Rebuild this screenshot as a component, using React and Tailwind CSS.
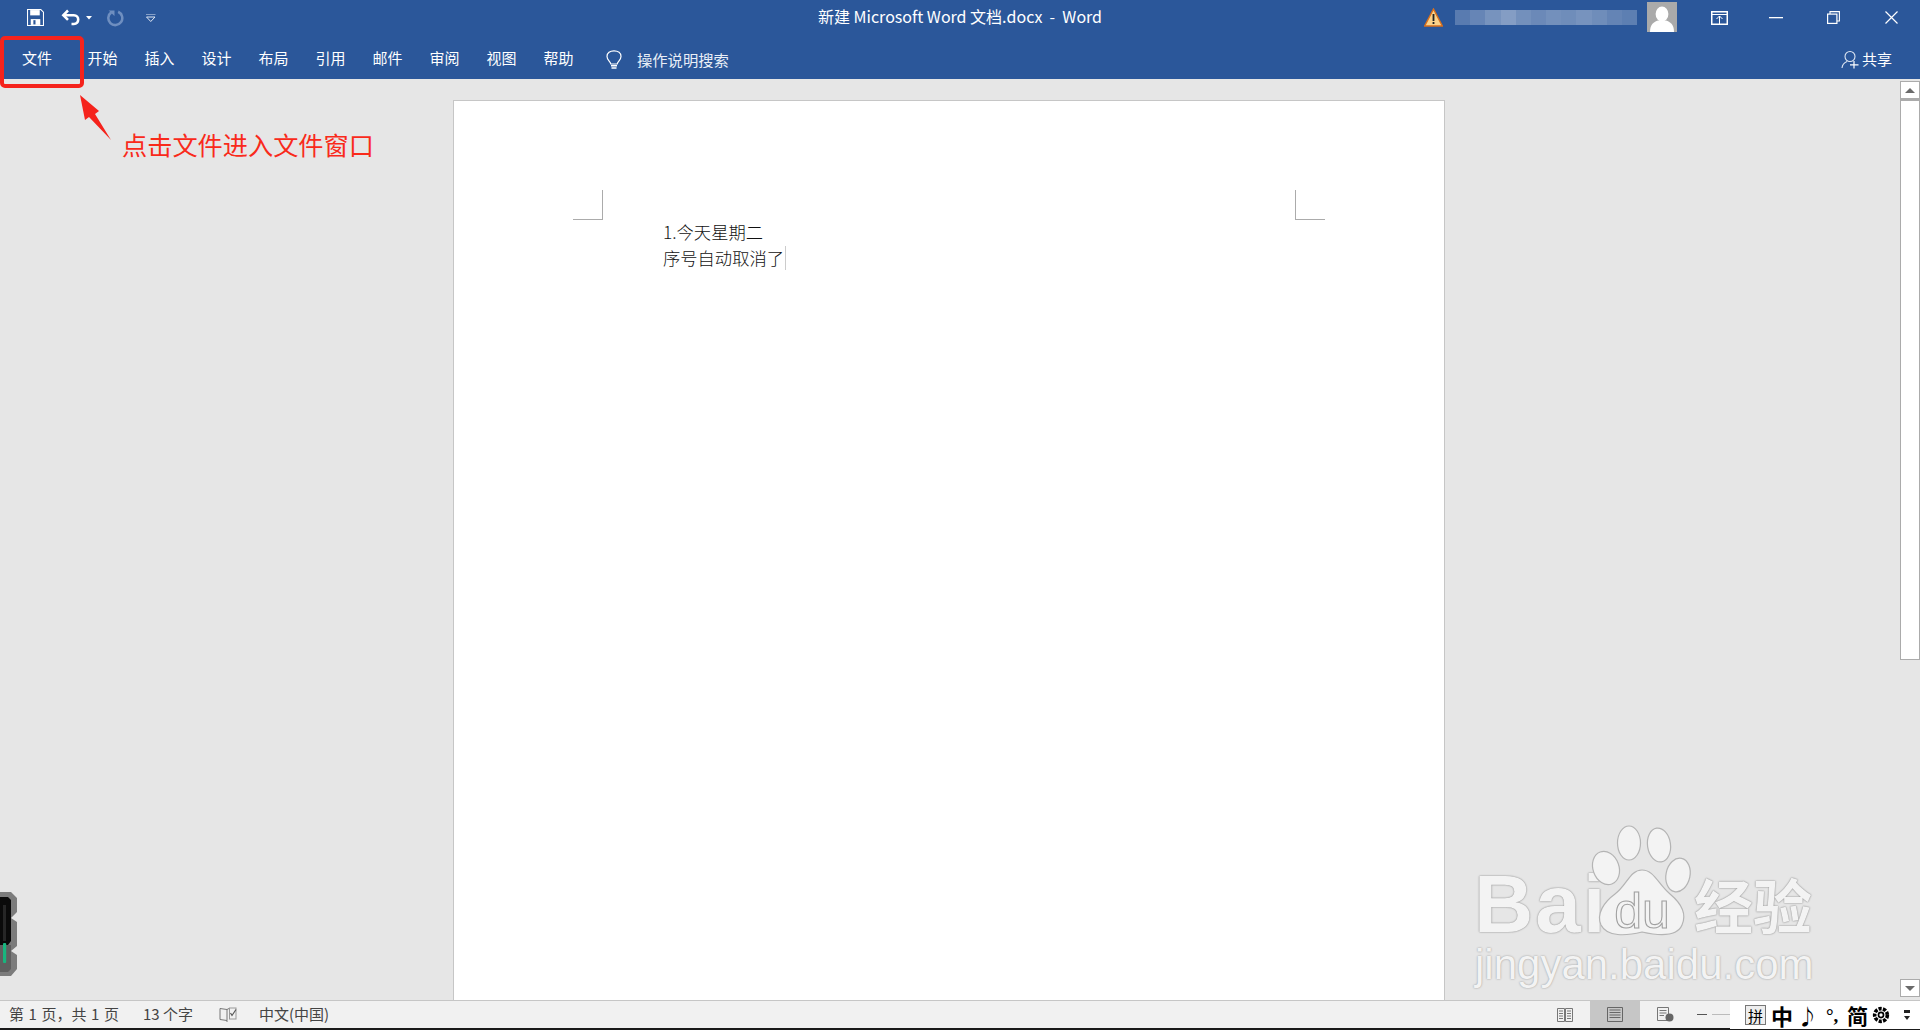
import React from "react";

const tabs = ["开始", "插入", "设计", "布局", "引用", "邮件", "审阅", "视图", "帮助"];

function Blur() {
  const blocks = [0.22, 0.28, 0.36, 0.42, 0.34, 0.3, 0.34, 0.32, 0.36, 0.32, 0.27, 0.24];
  return (
    <div className="flex h-[15px] w-[182px]">
      {blocks.map((o, i) => (
        <div key={i} className="h-full flex-1 bg-white" style={{ opacity: o }} />
      ))}
    </div>
  );
}

function TitleBar() {
  return (
    <div className="flex h-[40px] shrink-0 items-center bg-[#2b579a] pb-[5px] text-white">
      <div className="flex flex-1 items-center">
        <svg width="17" height="17" viewBox="0 0 16 16" className="ml-[27px] mr-[17px]">
          <path d="M0.5 0.5H13L15.5 3V15.5H0.5Z" fill="none" stroke="#fff" />
          <rect x="3" y="1" width="9" height="5" fill="#fff" />
          <path d="M3.5 15V9.5H12.5V15Z" fill="#fff" />
          <rect x="6" y="10.5" width="2" height="4" fill="#2b579a" />
        </svg>
        <svg width="21" height="19" viewBox="0 0 18 16" className="mr-[4px]">
          <path d="M6 2L2 6L6 10" fill="none" stroke="#fff" strokeWidth="2.2" />
          <path d="M2 6H11C16 6 16 13.5 11 13.5H9" fill="none" stroke="#fff" strokeWidth="2.2" />
        </svg>
        <svg width="6" height="4" viewBox="0 0 6 4" className="mr-[14px]">
          <path d="M0 0H6L3 3.5Z" fill="#fff" />
        </svg>
        <svg width="18" height="18" viewBox="0 0 17 17" className="mr-[22px]">
          <path d="M11.5 2.6A6.6 6.6 0 1 1 5 3.2" fill="none" stroke="#6f8fc0" strokeWidth="2.4" />
          <path d="M2.5 1.5H8V6.5Z" fill="#6f8fc0" />
        </svg>
        <svg width="10" height="8" viewBox="0 0 10 8">
          <path d="M0 0H9.5" stroke="#dfe7f3" strokeWidth="1" />
          <path d="M0.5 3H9L4.75 7.5Z" fill="none" stroke="#dfe7f3" />
        </svg>
      </div>
      <div className="mt-[-3px] text-[16px] font-['Noto_Sans_CJK_SC','Noto_Sans',sans-serif]">
        新建 Microsoft Word 文档.docx&nbsp; -&nbsp; Word
      </div>
      <div className="flex flex-1 items-center justify-end">
        <svg width="19" height="19" viewBox="0 0 19 19" className="mr-[12px]">
          <path d="M9.5 1L18.3 18H0.7Z" fill="#fbd38a" stroke="#d9701c" strokeWidth="1.4" />
          <rect x="8.6" y="6" width="1.8" height="7" fill="#222" />
          <rect x="8.6" y="14" width="1.8" height="2" fill="#222" />
        </svg>
        <Blur />
        <div className="ml-[10px] mt-[-1px] flex h-[30px] w-[30px] items-end justify-center bg-[#aaaaaa]">
          <svg width="24" height="27" viewBox="0 0 24 27">
            <ellipse cx="12" cy="9" rx="6.4" ry="7.6" fill="#fff" />
            <path d="M0 27C0 19 4 17 8 15.5H16C20 17 24 19 24 27Z" fill="#fff" />
          </svg>
        </div>
        <div className="ml-[34px] mr-[22px] flex items-center">
          <svg width="17" height="14" viewBox="0 0 17 14" className="mr-[41px]">
            <rect x="0.75" y="0.75" width="15.5" height="12.5" fill="none" stroke="#fff" strokeWidth="1.5" />
            <path d="M1 3.5H16" stroke="#fff" strokeWidth="1" />
            <path d="M8.5 5V13M5.5 8L8.5 5L11.5 8" fill="none" stroke="#fff" />
          </svg>
          <svg width="14" height="2" viewBox="0 0 14 2" className="mr-[44px]">
            <rect width="14" height="1.3" fill="#fff" />
          </svg>
          <svg width="13" height="13" viewBox="0 0 13 13" className="mr-[45px]">
            <rect x="0.6" y="3.1" width="9.3" height="9.3" fill="none" stroke="#fff" strokeWidth="1.2" />
            <path d="M3 3V0.6H12.4V10H10" fill="none" stroke="#fff" strokeWidth="1.1" />
          </svg>
          <svg width="13" height="13" viewBox="0 0 13 13">
            <path d="M0.5 0.5L12.5 12.5M12.5 0.5L0.5 12.5" stroke="#fff" strokeWidth="1.2" />
          </svg>
        </div>
      </div>
    </div>
  );
}

function TabBar() {
  return (
    <div className="flex h-[39px] shrink-0 items-center bg-[#2b579a] text-[15px] text-white font-['Noto_Sans_CJK_SC',sans-serif]">
      <div className="w-[74px] pb-[2px] text-center">文件</div>
      {tabs.map((t) => (
        <div key={t} className="w-[57px] pb-[2px] text-center">{t}</div>
      ))}
      <svg width="16" height="20" viewBox="0 0 16 20" className="ml-[19px] mr-[15px]">
        <path d="M4.8 14C4.5 11.5 1 10 1 6.4C1 3 4 0.8 8 0.8C12 0.8 15 3 15 6.4C15 10 11.5 11.5 11.2 14Z" fill="none" stroke="#fff" strokeWidth="1.2" />
        <path d="M5 15.8H11M5.5 18H10.5" stroke="#fff" strokeWidth="1.4" />
      </svg>
      <div className="text-[15.3px] text-[#e8eef7]">操作说明搜索</div>
      <div className="ml-auto mr-[28px] flex items-center">
        <svg width="18" height="19" viewBox="0 0 18 19" className="mr-[3px]">
          <circle cx="9" cy="6.5" r="5" fill="none" stroke="#dfe7f3" strokeWidth="1.1" />
          <path d="M1 18C1.4 14.5 3.5 12.5 6 11.5" fill="none" stroke="#dfe7f3" strokeWidth="1.1" />
          <path d="M13 11V18.5M9 14.8H17.5" stroke="#fff" strokeWidth="1.2" />
        </svg>
        <span>共享</span>
      </div>
    </div>
  );
}

function Page() {
  return (
    <div className="relative ml-[453px] mt-[21px] h-[900px] w-[992px] border-x border-t border-[#c6c6c6] bg-white pl-[209px] pt-[118px] text-[17.3px] leading-[26px] text-[#111] font-['Noto_Sans_CJK_SC',sans-serif] font-light">
      <div className="absolute left-[119px] top-[89px] h-[30px] w-[30px] border-b border-r border-[#ababab]" />
      <div className="absolute left-[841px] top-[89px] h-[30px] w-[30px] border-b border-l border-[#ababab]" />
      <div>1.今天星期二</div>
      <div className="flex items-center">
        <span>序号自动取消了</span>
        <span className="ml-[1px] h-[24px] w-px bg-[#cccccc]" />
      </div>
    </div>
  );
}

function Scrollbar() {
  return (
    <div className="flex w-[20px] shrink-0 flex-col pt-[2px] pb-[3px]">
      <div className="flex h-[18px] items-center justify-center border border-[#ababab] bg-white">
        <div className="h-0 w-0 border-x-[5px] border-b-[5px] border-x-transparent border-b-[#6a6a6a]" />
      </div>
      <div className="h-[561px] border border-t-2 border-[#ababab] bg-white" />
      <div className="flex-1" />
      <div className="flex h-[18px] items-center justify-center border border-[#ababab] bg-white">
        <div className="h-0 w-0 border-x-[5px] border-t-[5px] border-x-transparent border-t-[#6a6a6a]" />
      </div>
    </div>
  );
}

function Annotation() {
  return (
    <>
      <div className="absolute left-0 top-[36px] h-[52px] w-[84px] rounded-[5px] border-[4px] border-[#f5231c]" />
      <svg width="40" height="50" viewBox="0 0 40 50" className="absolute left-[75px] top-[93px]">
        <path d="M5 2L24 18L20 21L36 47L14 24L10 27Z" fill="#f5231c" />
      </svg>
      <div className="absolute left-[122px] top-[126px] text-[25.2px] leading-[36px] text-[#f92a1b] font-['Noto_Sans_CJK_SC',sans-serif]">
        点击文件进入文件窗口
      </div>
    </>
  );
}

function Gadget() {
  return (
    <svg width="18" height="86" viewBox="0 0 18 86" className="absolute left-0 top-[891px]">
      <path d="M0 1H11L17 7V21L11 27L17 31V55L11 60L17 64V78L11 85H0Z" fill="#7c7c7c" />
      <path d="M0 6H8L11 9V50L8 54H0Z" fill="#0a0a0a" />
      <path d="M0 54H11V78L8 81H0Z" fill="#5f5f5f" />
      <rect x="3" y="14" width="3" height="36" fill="#262626" />
      <rect x="3" y="52" width="3.2" height="20" fill="#18b67e" rx="1" />
    </svg>
  );
}

function Watermark() {
  return (
    <>
      <div className="absolute left-[1474px] top-[858px] text-[82px] leading-[92px] font-bold tracking-[2px] text-[#f3f3f3] [text-shadow:0_0_2px_#8f8f8f,0_0_1px_#999] font-['Liberation_Sans',sans-serif]">
        Bai
      </div>
      <svg width="110" height="120" viewBox="0 0 110 120" className="absolute left-[1590px] top-[822px]">
        <g fill="#f3f3f3" stroke="#b4b4b4" strokeWidth="1.2">
          <ellipse cx="16" cy="46" rx="13" ry="17" transform="rotate(-20 16 46)" />
          <ellipse cx="39" cy="21" rx="11.5" ry="17" />
          <ellipse cx="69" cy="23" rx="11.5" ry="17" transform="rotate(-8 69 23)" />
          <ellipse cx="88" cy="53" rx="12" ry="17" transform="rotate(12 88 53)" />
          <path d="M52 48C64 48 68 62 80 72C92 82 97 92 92 103C87 115 70 114 52 110C36 114 17 115 11 103C6 92 14 80 25 72C37 63 40 48 52 48Z" />
        </g>
        <text x="52" y="106" textAnchor="middle" fontSize="50" fill="#f3f3f3" stroke="#a0a0a0" strokeWidth="1.1" fontFamily="Liberation Sans, sans-serif">du</text>
      </svg>
      <div className="absolute left-[1694px] top-[861px] text-[59px] leading-[86px] font-bold text-[#f3f3f3] [text-shadow:0_0_2px_#8f8f8f,0_0_1px_#999] font-['Noto_Sans_CJK_SC',sans-serif]">
        经验
      </div>
      <div className="absolute left-[1475px] top-[940px] text-[42px] leading-[50px] text-[#f3f3f3] [text-shadow:0_0_2px_#8f8f8f] font-['Liberation_Sans',sans-serif]">
        jingyan.baidu.com
      </div>
    </>
  );
}

function StatusBar() {
  return (
    <div className="relative flex h-[28px] shrink-0 items-center border-t border-[#c6c6c6] bg-[#f1f1f1] text-[15px] text-[#444] font-['Noto_Sans_CJK_SC',sans-serif]">
      <span className="ml-[9px] w-[134px] [word-spacing:1.2px]">第 1 页，共 1 页</span>
      <span className="w-[76px]">13 个字</span>
      <svg width="18" height="16" viewBox="0 0 18 16" className="mr-[22px]">
        <path d="M8 2.5L1 1.5V12.5L8 13.5V2.5ZM8 2.5L10 1.5M8 13.5V15" fill="none" stroke="#777" />
        <rect x="10.5" y="1" width="6.5" height="11" fill="none" stroke="#999" />
        <path d="M11.5 6L13 8.5L17 2.5" fill="none" stroke="#555" strokeWidth="1.2" />
      </svg>
      <span>中文(中国)</span>
      <div className="ml-auto flex h-full items-center">
        <svg width="16" height="14" viewBox="0 0 16 14" className="mr-[17px]">
          <path d="M0.5 0.5H7.5V13.5H0.5ZM8.5 0.5H15.5V13.5H8.5ZM2 3H6M2 5.5H6M2 8H6M2 10.5H6M10 3H14M10 5.5H14M10 8H14M10 10.5H14" fill="none" stroke="#777" />
        </svg>
        <div className="flex h-full w-[50px] items-center justify-center bg-[#c6c6c6]">
          <svg width="16" height="15" viewBox="0 0 16 15">
            <path d="M0.5 0.5H15.5V14.5H0.5ZM2.5 3H13.5M2.5 5.5H13.5M2.5 8H13.5M2.5 10.5H13.5" fill="none" stroke="#666" />
          </svg>
        </div>
        <svg width="17" height="15" viewBox="0 0 17 15" className="ml-[17px]">
          <path d="M0.5 0.5H11.5V13.5H0.5ZM2.5 3.5H9.5M2.5 6H9.5M2.5 8.5H7" fill="none" stroke="#777" />
          <circle cx="12.5" cy="10.5" r="4" fill="#666" />
        </svg>
        <div className="ml-[23px] h-px w-[10px] bg-[#555]" />
        <div className="ml-[5px] h-px w-[18px] bg-[#bbb]" />
        <div className="relative flex h-[28px] w-[190px] items-center self-start bg-white pl-[15px] text-[20px] font-bold leading-none text-black">
          <div className="mr-[5px] flex h-[20px] w-[21px] items-center justify-center border border-[#777] bg-[#eeeeee] text-[15px] font-normal">拼</div>
          <span className="mr-[4px] text-[22px]">中</span>
          <span className="mr-[11px] w-[18px] text-center text-[21px]">♪</span>
          <span className="mr-[2px] w-[19px] text-[19px] font-['Liberation_Serif',serif]">°,</span>
          <span className="mr-[4px] text-[21px]">简</span>
          <svg width="18" height="18" viewBox="0 0 17 17" className="mr-[14px]">
            <circle cx="8.5" cy="8.5" r="6" fill="none" stroke="#000" strokeWidth="3.4" strokeDasharray="3 1.2" />
            <circle cx="8.5" cy="8.5" r="2.4" fill="none" stroke="#000" strokeWidth="1.6" />
          </svg>
          <div className="flex flex-col items-center gap-[3px]">
            <div className="h-[3px] w-[6px] bg-[#222]" />
            <div className="h-0 w-0 border-x-[3px] border-t-[4px] border-x-transparent border-t-[#222]" />
          </div>
        </div>
      </div>
    </div>
  );
}

export default function App() {
  return (
    <div className="relative flex h-[1030px] w-[1920px] flex-col overflow-hidden bg-[#e6e6e6] font-['Noto_Sans_CJK_SC',sans-serif]">
      <TitleBar />
      <TabBar />
      <div className="flex h-[921px] shrink-0 overflow-hidden">
        <div className="flex-1 overflow-hidden"><Page /></div>
        <Scrollbar />
      </div>
      <StatusBar />
      <div className="h-[2px] shrink-0 bg-[#1a1a1a]" />
      <Annotation />
      <Gadget />
      <Watermark />
    </div>
  );
}
